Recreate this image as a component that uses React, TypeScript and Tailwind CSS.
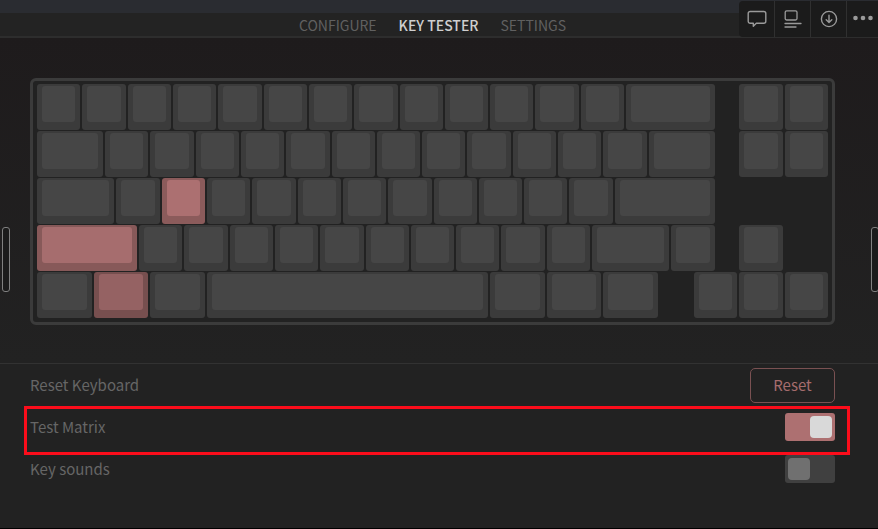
import { useState } from "react";
import { clsx } from "clsx";

const TABS = ["CONFIGURE", "KEY TESTER", "SETTINGS"];

type Key = {
  // width in quarter units
  width: number;
  color?: "gap" | "bright" | "mid" | "dim";
};

const keys = (count: number, width = 4): Key[] =>
  Array.from({ length: count }, () => ({ width }));
const gap = (width: number): Key => ({ width, color: "gap" });

const ROWS: Key[][] = [
  [...keys(13), { width: 8 }, gap(2), ...keys(2)],
  [{ width: 6 }, ...keys(12), { width: 6 }, gap(2), ...keys(2)],
  [
    { width: 7 },
    ...keys(1),
    { width: 4, color: "bright" },
    ...keys(9),
    { width: 9 },
    gap(10),
  ],
  [
    { width: 9, color: "mid" },
    ...keys(10),
    { width: 7 },
    ...keys(1),
    gap(2),
    ...keys(1),
    gap(4),
  ],
  [
    { width: 5 },
    { width: 5, color: "dim" },
    { width: 5 },
    { width: 25 },
    ...keys(3, 5),
    gap(3),
    ...keys(3),
  ],
];

const SPANS: Record<number, string> = {
  2: "col-span-2",
  3: "col-span-3",
  4: "col-span-4",
  5: "col-span-5",
  6: "col-span-6",
  7: "col-span-7",
  8: "col-span-8",
  9: "col-span-9",
  10: "col-span-10",
  25: "col-span-25",
};

function Keycap({ width, color }: Key) {
  if (color === "gap") return <div className={SPANS[width]} />;
  return (
    <div className={clsx("px-px pb-px", SPANS[width])}>
      <div
        className={clsx(
          "h-full rounded-[3px] px-[5px] pt-[2px] pb-[8px]",
          !color && "bg-[#3b3b3b]",
          color === "bright" && "bg-[#8b5b5b]",
          color === "mid" && "bg-[#875959]",
          color === "dim" && "bg-[#774f4f]"
        )}
      >
        <div
          className={clsx(
            "h-full rounded-[3px]",
            !color && "bg-[#464646]",
            color === "bright" && "bg-[#ac7071]",
            color === "mid" && "bg-[#a66d6e]",
            color === "dim" && "bg-[#956263]"
          )}
        />
      </div>
    </div>
  );
}

function Toggle({
  id,
  checked,
  onChange,
}: {
  id: string;
  checked: boolean;
  onChange: (checked: boolean) => void;
}) {
  return (
    <span className="relative block h-7 w-[50px]">
      <input
        id={id}
        type="checkbox"
        checked={checked}
        onChange={(e) => onChange(e.target.checked)}
        className="block h-full w-full appearance-none rounded-[3px] bg-[#404040] checked:bg-[#ad7071]"
      />
      <span
        className={clsx(
          "pointer-events-none absolute top-[3px] h-[22px] w-[22px] rounded-[4px]",
          checked ? "right-[3px] bg-[#d9d9d9]" : "left-[3px] bg-[#707070]"
        )}
      />
    </span>
  );
}

function Toolbar() {
  const button =
    "flex h-full w-9 shrink-0 items-center justify-center border-r border-[#303030] last:w-[31px] last:border-r-0";
  return (
    <div className="absolute top-px right-0 flex h-9 overflow-hidden rounded-l-[4px] bg-[#1b1b1b] text-[#9a9a9a]">
      <button type="button" aria-label="Comment" className={button}>
        <svg width="20" height="18" viewBox="0 0 20 18" fill="none" stroke="currentColor" strokeWidth="1.4" strokeLinejoin="round">
          <path d="M3.2 1.5h13.6a2 2 0 0 1 2 2v7.8a2 2 0 0 1-2 2H9.3L6.3 16.3V13.3H3.2a2 2 0 0 1-2-2V3.5a2 2 0 0 1 2-2z" />
        </svg>
      </button>
      <button type="button" aria-label="Text wrap" className={button}>
        <svg width="18" height="18" viewBox="0 0 18 18" fill="none" stroke="currentColor" strokeWidth="1.3" strokeLinecap="round">
          <rect x="1.2" y="0.8" width="11.8" height="9.2" rx="1.5" />
          <path d="M1 13.5h16M1 17h11" />
        </svg>
      </button>
      <button type="button" aria-label="Download" className={button}>
        <svg width="18" height="18" viewBox="0 0 18 18" fill="none" stroke="currentColor" strokeWidth="1.4" strokeLinecap="round" strokeLinejoin="round">
          <circle cx="9" cy="9" r="7.6" />
          <path d="M9 5.2v7.2M6.2 9.8 9 12.5l2.8-2.7" />
        </svg>
      </button>
      <button type="button" aria-label="More" className={button}>
        <svg width="20" height="18" viewBox="0 0 20 18" fill="currentColor">
          <circle cx="2.5" cy="8" r="2.3" />
          <circle cx="10" cy="8" r="2.3" />
          <circle cx="17.5" cy="8" r="2.3" />
        </svg>
      </button>
    </div>
  );
}

export default function App() {
  const [tab, setTab] = useState("KEY TESTER");
  const [testMatrix, setTestMatrix] = useState(true);
  const [keySounds, setKeySounds] = useState(false);

  return (
    <div className="relative flex min-h-screen flex-col overflow-hidden border-b border-black bg-[#222222] font-['Noto_Sans_CJK_SC',sans-serif] text-[15px] leading-6 text-[#666666]">
      <header className="border-b-2 border-[#2d2d2d] bg-[#232323]">
        <div className="h-[13px] bg-[#2a2c31]" />
        <nav className="flex h-[23px] items-center justify-center gap-[22px] pr-[13px] text-[14px]">
          {TABS.map((name) => (
            <button
              key={name}
              type="button"
              onClick={() => setTab(name)}
              className={clsx(
                name === tab ? "font-medium text-[#cfcfcf]" : "text-[#606060]"
              )}
            >
              {name}
            </button>
          ))}
        </nav>
      </header>
      <Toolbar />

      <main className="bg-linear-to-b from-[#1e1b1c] to-[#222222] pt-10 pr-[43px] pb-[38px] pl-[30px]">
        <div className="rounded-[6px] border-3 border-[#3b3b3b] bg-[#222222] p-[3px]">
          {ROWS.map((row, i) => (
            <div
              key={i}
              className="grid h-[47px] grid-cols-[repeat(70,minmax(0,1fr))]"
            >
              {row.map((key, j) => (
                <Keycap key={j} {...key} />
              ))}
            </div>
          ))}
        </div>
      </main>

      <section className="border-t border-[#323232] pr-[43px] pl-[30px]">
        <div className="flex h-[42px] items-center justify-between">
          <span>Reset Keyboard</span>
          <button
            type="button"
            className="h-[35px] w-[85px] rounded-[5px] border border-[#7a5152] text-[#a56c6d]"
          >
            Reset
          </button>
        </div>
        <div className="relative flex h-[42px] items-center justify-between">
          <label htmlFor="test-matrix">Test Matrix</label>
          <Toggle
            id="test-matrix"
            checked={testMatrix}
            onChange={setTestMatrix}
          />
          <div className="pointer-events-none absolute top-0 -right-[15px] -bottom-[7px] -left-[6px] border-3 border-[#fc0d1b]" />
        </div>
        <div className="flex h-[42px] items-center justify-between">
          <label htmlFor="key-sounds">Key sounds</label>
          <Toggle id="key-sounds" checked={keySounds} onChange={setKeySounds} />
        </div>
      </section>

      <div className="absolute top-[227px] left-[2px] h-[65px] w-2 rounded-[3px] border border-[#808080] bg-[#1b1b1b]" />
      <div className="absolute top-[227px] -right-px h-[65px] w-2 rounded-[3px] border border-[#808080] bg-[#1b1b1b]" />
    </div>
  );
}
